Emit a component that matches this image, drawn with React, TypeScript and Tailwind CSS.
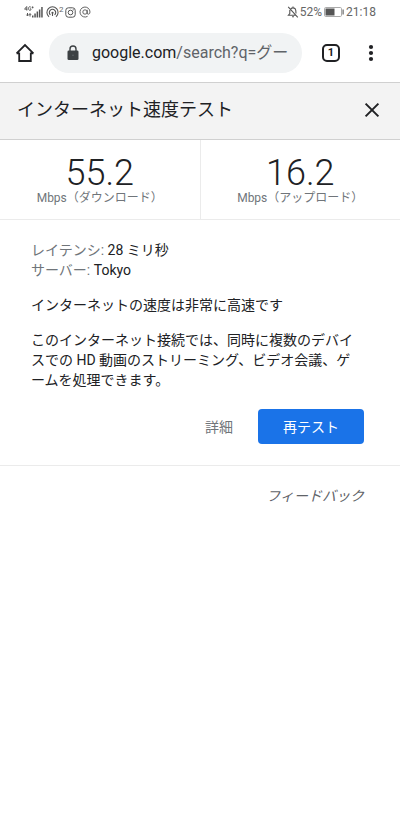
import React from 'react';

interface SpeedResultProps {
    value: string;
    label: string;
}

const SignalIcon = () => (
    <svg width="20" height="12" viewBox="0 0 20 12" fill="#555">
        <path d="M2.6 0.5L0.6 3.2H3.4M2.8 0.5V4.6M6.8 1.2C5.8 0 4.4 0.9 4.5 2.6C4.5 4.6 6.6 4.8 6.9 3.8V2.8H5.9M8.6 0.4V2.4M7.7 1.4H9.5" fill="none" stroke="#555" strokeWidth="0.9" />
        <path d="M3.5 7V9.5M2.5 8.7L3.5 10L4.5 8.7M6 10.5V8M5 8.8L6 7.5L7 8.8" fill="none" stroke="#555" strokeWidth="1" />
        <rect x="8" y="9.5" width="1.5" height="2" />
        <rect x="10.3" y="7.5" width="1.5" height="4" />
        <rect x="12.6" y="5.5" width="1.5" height="6" />
        <rect x="14.9" y="3.5" width="1.5" height="8" />
        <rect x="17.2" y="1" width="1.5" height="10.5" />
    </svg>
);

const HotspotIcon = () => (
    <svg width="13" height="12" viewBox="0 0 13 12" fill="none" stroke="#555" strokeWidth="1.1">
        <path d="M3 10.7A5.6 5.6 0 1 1 10 10.7" />
        <path d="M4.4 8.9A3.2 3.2 0 1 1 8.6 8.9" />
        <circle cx="6.5" cy="6.8" r="1.1" fill="#555" stroke="none" />
        <path d="M6.5 7V10" />
    </svg>
);

const CameraIcon = () => (
    <svg width="11" height="11" viewBox="0 0 11 11" fill="none" stroke="#555">
        <rect x="0.8" y="0.8" width="9.4" height="9.4" rx="2.6" />
        <circle cx="5.5" cy="5.5" r="2.3" />
        <circle cx="8.2" cy="2.8" r="0.6" fill="#555" stroke="none" />
    </svg>
);

const AtIcon = () => (
    <svg width="12" height="12" viewBox="0 0 12 12" fill="none" stroke="#555" strokeWidth="0.9">
        <circle cx="6" cy="6" r="2.2" />
        <path d="M8.2 3.8V7Q8.2 8.3 9.4 8.2Q11 7.9 11 6A5 5 0 1 0 8.6 10.3" />
    </svg>
);

const BellOffIcon = () => (
    <svg width="12" height="12" viewBox="0 0 12 12" fill="none" stroke="#555" strokeWidth="1.1">
        <path d="M3.8 2.7Q6 1 8.2 2.8Q9 3.7 9 7.4M2.8 4V7.5L1.4 9.2H8.8M5 10.8H7M6 0.4V1.6M1.2 0.8L10.8 11.4" />
    </svg>
);

const BatteryIcon = () => (
    <svg width="20" height="10" viewBox="0 0 20 10">
        <rect x="0.5" y="0.5" width="17" height="9" rx="1.2" fill="#fff" stroke="#aaa" />
        <rect x="1.5" y="1.5" width="9" height="7" fill="#555" />
        <rect x="18.5" y="2.5" width="1.2" height="5" fill="#666" />
    </svg>
);

const HomeIcon = () => (
    <svg width="20" height="20" viewBox="0 0 20 20" fill="none" stroke="#202124" strokeWidth="1.8">
        <path d="M1.6 10.4L10 2L18.4 10.4M1.6 10.4H4.2V18H15.8V10.4H18.4" />
    </svg>
);

const LockIcon = () => (
    <svg width="12" height="16" viewBox="0 0 12 16">
        <rect x="0.5" y="5.5" width="11" height="9.5" rx="1.3" fill="#3c4043" />
        <path d="M3 6V4A3 3 0 0 1 9 4V6" fill="none" stroke="#3c4043" strokeWidth="1.4" />
        <circle cx="6" cy="10.2" r="0.8" fill="#5f6368" />
    </svg>
);

const MoreIcon = () => (
    <svg width="6" height="18" viewBox="0 0 6 18" fill="#202124">
        <circle cx="3" cy="3" r="2.1" />
        <circle cx="3" cy="9" r="2.1" />
        <circle cx="3" cy="15" r="2.1" />
    </svg>
);

const CloseIcon = () => (
    <svg width="16" height="16" viewBox="0 0 16 16" fill="none" stroke="#202124" strokeWidth="2">
        <path d="M1.6 1.6L14.4 14.4M14.4 1.6L1.6 14.4" />
    </svg>
);

const StatusBar = () => (
    <div className="flex h-6 items-center justify-between px-6 text-xs text-[#666]">
        <div className="flex items-center">
            <SignalIcon />
            <span className="ml-0.5"><HotspotIcon /></span>
            <span className="self-start text-[8px] leading-2">2</span>
            <span className="ml-px"><CameraIcon /></span>
            <span className="ml-[3px]"><AtIcon /></span>
        </div>
        <div className="flex items-center">
            <BellOffIcon />
            <span className="ml-px">52%</span>
            <span className="ml-0.5"><BatteryIcon /></span>
            <span className="ml-0.5">21:18</span>
        </div>
    </div>
);

const BrowserBar = () => (
    <div className="flex h-[58px] items-center bg-white pr-[26px] pl-[15px]">
        <button type="button" aria-label="ホーム"><HomeIcon /></button>
        <button type="button" className="ml-[14px] flex h-10 min-w-0 flex-1 items-center rounded-full bg-[#f1f3f4] pl-[18px] text-left">
            <LockIcon />
            <span className="ml-[13px] truncate text-base text-[#5f6368]">
                <span className="text-[#202124]">google.com</span>/search?q=グー
            </span>
        </button>
        <button type="button" className="ml-5 flex size-[18px] items-center justify-center rounded-[5px] border-2 border-[#202124] text-[11px] font-bold text-[#202124]">
            1
        </button>
        <button type="button" aria-label="メニュー" className="ml-7"><MoreIcon /></button>
    </div>
);

const SpeedResult: React.FC<SpeedResultProps> = ({ value, label }) => (
    <div className="flex h-[79px] flex-1 flex-col items-center pt-[15px]">
        <span className="text-4xl leading-9 font-light text-[#202124]">{value}</span>
        <span className="text-xs leading-[14px] text-[#70757a]">Mbps{label}</span>
    </div>
);

export default function App() {
    return (
        <div lang="ja" className="min-h-screen bg-white font-[Roboto,'Noto_Sans_CJK_JP',sans-serif] text-sm text-[#202124]">
            <StatusBar />
            <BrowserBar />

            <main>
                <header className="flex h-[58px] items-center justify-between border-y border-[#d0d0d0] bg-[#f3f3f3] pr-5 pb-[3px] pl-[17px]">
                    <h1 className="text-lg">インターネット速度テスト</h1>
                    <button type="button" aria-label="閉じる"><CloseIcon /></button>
                </header>

                <section className="flex divide-x divide-[#ebebeb] border-b border-[#ebebeb]">
                    <SpeedResult value="55.2" label="（ダウンロード）" />
                    <SpeedResult value="16.2" label="（アップロード）" />
                </section>

                <section className="border-b border-[#ebebeb] pt-5 pr-9 pb-[21px] pl-[31px] leading-5">
                    <p><span className="text-[#70757a]">レイテンシ:</span> 28 ミリ秒</p>
                    <p><span className="text-[#70757a]">サーバー:</span> Tokyo</p>
                    <p className="mt-[15px]">インターネットの速度は非常に高速です</p>
                    <p className="mt-[15px] break-all">
                        このインターネット接続では、同時に複数のデバイスでの HD 動画のストリーミング、ビデオ会議、ゲームを処理できます。
                    </p>
                    <div className="mt-[19px] flex items-center justify-end gap-[25px]">
                        <button type="button" className="text-[#70757a]">詳細</button>
                        <button type="button" className="h-[35px] w-[106px] rounded bg-[#1a73e8] text-white">再テスト</button>
                    </div>
                </section>

                <footer className="flex justify-end pt-5 pr-9">
                    <a href="#feedback" className="leading-5 text-[#5f6368] italic">フィードバック</a>
                </footer>
            </main>
        </div>
    );
}
